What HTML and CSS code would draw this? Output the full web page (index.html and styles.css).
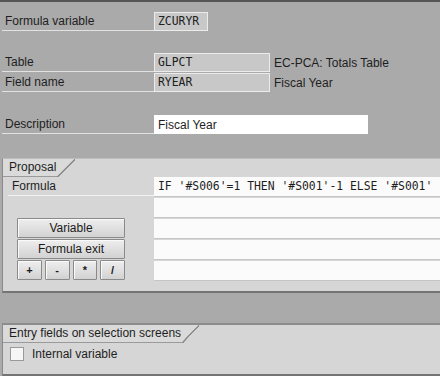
FILE: index.html
```html
<!DOCTYPE html>
<html lang="en">
<head>
    <meta charset="UTF-8">
    <meta name="viewport" content="width=device-width, initial-scale=1.0">
    <title>Formula variable ZCURYR</title>
    <link rel="stylesheet" href="styles.css">
</head>
<body>
    <div class="block block-var">
        <div class="field">
            <div class="label">Formula variable</div>
            <div class="value ro w-short">ZCURYR</div>
        </div>
    </div>

    <div class="block block-table">
        <div class="field">
            <div class="label">Table</div>
            <div class="value ro w-mid">GLPCT</div>
            <div class="note">EC-PCA: Totals Table</div>
        </div>
        <div class="field">
            <div class="label">Field name</div>
            <div class="value ro w-mid">RYEAR</div>
            <div class="note">Fiscal Year</div>
        </div>
    </div>

    <div class="block block-desc">
        <div class="field">
            <div class="label">Description</div>
            <div class="value edit w-long">Fiscal Year</div>
        </div>
    </div>

    <!-- Proposal group -->
    <div class="group group-proposal">
        <div class="tab">
            <span class="tab-text">Proposal</span>
            <span class="tab-slant"></span>
        </div>
        <div class="proposal">
            <div class="label inner">Formula</div>
            <div class="line formula">IF '#S006'=1 THEN '#S001'-1 ELSE '#S001'</div>
            <div class="line"></div>
            <div class="line"></div>
            <div class="line"></div>
            <div class="line"></div>
            <div class="buttons">
                <div class="btn">Variable</div>
                <div class="btn">Formula exit</div>
                <div class="ops">
                    <div class="btn op">+</div>
                    <div class="btn op">-</div>
                    <div class="btn op">*</div>
                    <div class="btn op">/</div>
                </div>
            </div>
        </div>
    </div>

    <!-- Entry fields group -->
    <div class="group group-entry">
        <div class="tab">
            <span class="tab-text">Entry fields on selection screens</span>
            <span class="tab-slant"></span>
        </div>
        <div class="check-row">
            <span class="checkbox"></span>
            <span class="check-label">Internal variable</span>
        </div>
    </div>
</body>
</html>
```

FILE: styles.css
```css
body {
    margin: 0;
    height: 374px;
    overflow: hidden;
    background: #aaaaaa;
    border-top: 2px solid #555555;
    font-family: "Liberation Sans", Arial, sans-serif;
    font-size: 12px;
    color: #1e1e1e;
}
.block {
    display: flex;
    flex-direction: column;
    gap: 1px;
}
.block-var {
    padding-top: 10px;
}
.block-table {
    margin-top: 22px;
}
.block-desc {
    margin-top: 23px;
}
.field {
    display: flex;
    height: 19px;
}
.label {
    box-sizing: border-box;
    width: 152px;
    margin-left: 2px;
    padding: 1px 0 0 3px;
    line-height: 17px;
    border-bottom: 1px solid #e2e2e2;
}
.value {
    box-sizing: border-box;
    height: 19px;
    padding-left: 3px;
    line-height: 17px;
    white-space: nowrap;
}
.ro {
    background: #c8c8c8;
    border: 1px solid #ececec;
    font-family: "DejaVu Sans Mono", "Liberation Mono", monospace;
    font-size: 11.4px;
    color: #202020;
}
.edit {
    background: #ffffff;
    border: 1px solid #ffffff;
    padding-top: 1px;
}
.w-short {
    width: 54px;
}
.w-mid {
    width: 116px;
}
.w-long {
    width: 214px;
}
.note {
    padding: 1px 0 0 4px;
    line-height: 18px;
}

/* groups */
.group {
    margin-left: 2px;
    background: #d6d6d6;
    border-left: 1px solid #8a8a8a;
}
.group-proposal {
    margin-top: 24px;
    padding-bottom: 11px;
    border-top: 1px solid #bdbdbd;
    border-bottom: 2px solid #747474;
}
.group-entry {
    margin-top: 30px;
    padding-bottom: 13px;
    border-top: 2px solid #8c8c8c;
    border-bottom: 2px solid #747474;
}
.tab {
    display: flex;
    height: 18px;
}
.tab-text {
    padding: 0 1px 0 6px;
    line-height: 17px;
    background: #dadada;
    border-bottom: 1px solid #9a9a9a;
    white-space: nowrap;
}
.tab-slant {
    width: 18px;
    background: linear-gradient(to bottom right, #dadada 47%, #8e8e8e 48%, #8e8e8e 53%, transparent 54%);
}
.group-entry .tab-slant {
    width: 17px;
}

.proposal {
    display: grid;
    grid-template-columns: 151px 1fr;
    grid-template-rows: repeat(5, 19px);
    row-gap: 2px;
}
.label.inner {
    grid-column: 1;
    grid-row: 1;
    width: auto;
    margin-left: 5px;
    padding-left: 4px;
    border-bottom-color: #f2f2f2;
}
.line {
    grid-column: 2;
    background: #fbfbfb;
    box-shadow: 0 1px 0 #c6c6c6;
}
.formula {
    padding-left: 4px;
    line-height: 18px;
    font-family: "DejaVu Sans Mono", "Liberation Mono", monospace;
    font-size: 11.4px;
    white-space: nowrap;
    overflow: hidden;
}
.buttons {
    grid-column: 1;
    grid-row: 3 / span 3;
    margin-left: 14px;
    width: 108px;
    display: flex;
    flex-direction: column;
    gap: 1px;
    margin-top: -1px;
}
.btn {
    box-sizing: border-box;
    height: 20px;
    line-height: 18px;
    text-align: center;
    border: 1px solid #8a8a8a;
    border-radius: 1px;
    background: linear-gradient(#eeeeee, #d2d2d2);
    box-shadow: inset 1px 1px 0 #fafafa;
    color: #1a1a1a;
}
.ops {
    display: flex;
    gap: 3px;
}
.op {
    flex: 1;
    font-weight: bold;
    font-size: 11px;
}

.check-row {
    display: flex;
    align-items: center;
    margin-top: 4px;
    height: 14px;
}
.checkbox {
    box-sizing: border-box;
    width: 14px;
    height: 14px;
    margin-left: 7px;
    background: #f6f6f6;
    border: 1px solid #9a9a9a;
}
.check-label {
    margin-left: 8px;
}
```
